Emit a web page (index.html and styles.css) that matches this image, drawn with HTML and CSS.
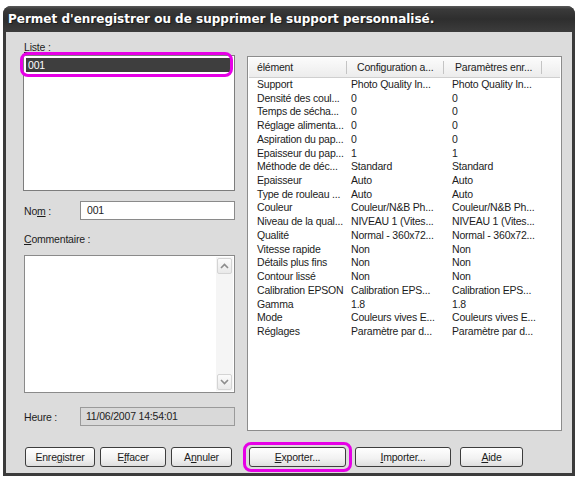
FILE: index.html
```html
<!DOCTYPE html>
<html lang="fr">
<head>
<meta charset="utf-8">
<title>Support personnalisé</title>
<link rel="stylesheet" href="styles.css">
</head>
<body>
<div class="window">
  <div class="titlebar"><span class="title">Permet d'enregistrer ou de supprimer le support personnalisé.</span></div>
  <div class="body">
    <div class="main">
      <div class="left">
        <div class="label lbl-liste"><u>L</u>iste :</div>
        <div class="listbox">
          <div class="item sel">001</div>
          <div class="hl hl-list"></div>
        </div>
        <div class="field-row nom">
          <span class="lbl">No<u>m</u> :</span>
          <div class="input">001</div>
        </div>
        <div class="label lbl-comm"><u>C</u>ommentaire :</div>
        <div class="textarea">
          <div class="scroll">
            <div class="arrow up"><svg width="9" height="6" viewBox="0 0 9 6"><path d="M1 5 L4.5 1.5 L8 5" fill="none" stroke="#8c8c8c" stroke-width="1.6"/></svg></div>
            <div class="track"></div>
            <div class="arrow down"><svg width="9" height="6" viewBox="0 0 9 6"><path d="M1 1 L4.5 4.5 L8 1" fill="none" stroke="#8c8c8c" stroke-width="1.6"/></svg></div>
          </div>
        </div>
        <div class="field-row heure">
          <span class="lbl">Heure :</span>
          <div class="input disabled">11/06/2007 14:54:01</div>
        </div>
      </div>
      <div class="right">
        <div class="listview">
          <div class="lv-head">
            <div class="hc c1">élément</div>
            <div class="hc c2">Configuration a...</div>
            <div class="hc c3">Paramètres enr...</div>
            <div class="hc c4"></div>
          </div>
          <div class="lv-rows">
            <div class="r">Support</div><div class="r">Photo Quality In...</div><div class="r">Photo Quality In...</div>
            <div class="r">Densité des coul...</div><div class="r">0</div><div class="r">0</div>
            <div class="r">Temps de sécha...</div><div class="r">0</div><div class="r">0</div>
            <div class="r">Réglage alimenta...</div><div class="r">0</div><div class="r">0</div>
            <div class="r">Aspiration du pap...</div><div class="r">0</div><div class="r">0</div>
            <div class="r">Epaisseur du pap...</div><div class="r">1</div><div class="r">1</div>
            <div class="r">Méthode de déc...</div><div class="r">Standard</div><div class="r">Standard</div>
            <div class="r">Epaisseur</div><div class="r">Auto</div><div class="r">Auto</div>
            <div class="r">Type de rouleau ...</div><div class="r">Auto</div><div class="r">Auto</div>
            <div class="r">Couleur</div><div class="r">Couleur/N&amp;B Ph...</div><div class="r">Couleur/N&amp;B Ph...</div>
            <div class="r">Niveau de la qual...</div><div class="r">NIVEAU 1 (Vites...</div><div class="r">NIVEAU 1 (Vites...</div>
            <div class="r">Qualité</div><div class="r">Normal - 360x72...</div><div class="r">Normal - 360x72...</div>
            <div class="r">Vitesse rapide</div><div class="r">Non</div><div class="r">Non</div>
            <div class="r">Détails plus fins</div><div class="r">Non</div><div class="r">Non</div>
            <div class="r">Contour lissé</div><div class="r">Non</div><div class="r">Non</div>
            <div class="r">Calibration EPSON</div><div class="r">Calibration EPS...</div><div class="r">Calibration EPS...</div>
            <div class="r">Gamma</div><div class="r">1.8</div><div class="r">1.8</div>
            <div class="r">Mode</div><div class="r">Couleurs vives E...</div><div class="r">Couleurs vives E...</div>
            <div class="r">Réglages</div><div class="r">Paramètre par d...</div><div class="r">Paramètre par d...</div>
          </div>
        </div>
      </div>
    </div>
    <div class="buttons">
      <div class="btn-group left-group">
        <div class="btn b-enr">Enre<u>g</u>istrer</div>
        <div class="btn b-eff">E<u>f</u>facer</div>
        <div class="btn b-ann">A<u>n</u>nuler</div>
      </div>
      <div class="btn-group right-group">
        <div class="btn b-exp"><u>E</u>xporter...<div class="hl hl-exp"></div></div>
        <div class="btn b-imp"><u>I</u>mporter...</div>
        <div class="btn b-aide"><u>A</u>ide</div>
      </div>
    </div>
  </div>
</div>
</body>
</html>
```

FILE: styles.css
```css
* { box-sizing: border-box; }

body {
  margin: 0;
  background: #ffffff;
  font-family: "Liberation Sans", Arial, sans-serif;
  font-size: 10.5px;
  letter-spacing: -0.2px;
  color: #1c1c1c;
}

u { text-decoration: underline; text-underline-offset: 1px; }

.window {
  margin: 6px 0 0 3px;
  width: 572px;
  height: 470px;
  display: flex;
  flex-direction: column;
  background: #3b3b3b;
  border-radius: 8px 8px 0 0;
  padding: 0 3px 3px;
}

.titlebar {
  height: 26px;
  margin: 0 -3px;
  padding-left: 5px;
  display: flex;
  align-items: center;
  border-radius: 8px 8px 0 0;
  background: linear-gradient(#5a5a5a 0, #3a3a3a 3px, #2e2e2e 50%, #3c3c3c 100%);
}

.title {
  color: #ffffff;
  font-family: "DejaVu Sans", Verdana, sans-serif;
  font-weight: bold;
  font-size: 12px;
  letter-spacing: 0;
  text-shadow: 1px 1px 0 #1a1a1a;
}

.body {
  flex: 1;
  background: #dcdcdc;
  display: flex;
  flex-direction: column;
  padding: 0 10px 0 16px;
}

.main {
  display: flex;
  gap: 12px;
}

.left {
  width: 213px;
  display: flex;
  flex-direction: column;
}

.label {
  height: 13px;
  line-height: 13px;
  padding-left: 2px;
}

.lbl-liste { margin-top: 9px; }

.listbox {
  position: relative;
  margin-top: 1px;
  margin-left: 1px;
  height: 136px;
  border: 1px solid #7d7d7d;
  background: #ffffff;
  padding: 2px 2px;
}

.item.sel {
  height: 14px;
  line-height: 14px;
  background: #3e3e3e;
  color: #ffffff;
  padding-left: 2px;
}

.hl {
  position: absolute;
  border: 3px solid #e600e6;
  border-radius: 8px;
  pointer-events: none;
}

.hl-list {
  left: -4px;
  top: -4px;
  width: 213px;
  height: 25px;
}

.field-row {
  display: flex;
  align-items: center;
  height: 19px;
}

.field-row .lbl {
  width: 58px;
  padding-left: 2px;
}

.input {
  width: 155px;
  height: 19px;
  line-height: 17px;
  border: 1px solid #8a8a8a;
  background: #ffffff;
  padding-left: 6px;
}

.input.disabled {
  background: #d9d9d9;
  border-color: #9a9a9a;
  color: #222;
  padding-left: 5px;
}

.nom { margin-top: 10px; }

.lbl-comm { margin-top: 13px; }

.textarea {
  margin-top: 9px;
  margin-left: 2px;
  width: 211px;
  height: 138px;
  border: 1px solid #8a8a8a;
  background: #ffffff;
  display: flex;
  justify-content: flex-end;
  padding: 1px;
}

.scroll {
  width: 17px;
  display: flex;
  flex-direction: column;
  background: #f5f5f5;
}

.arrow {
  height: 16px;
  margin: 1px;
  border: 1px solid #d4d4d4;
  border-radius: 2px;
  background: linear-gradient(#fbfbfb, #e9e9e9);
  display: flex;
  align-items: center;
  justify-content: center;
}

.track { flex: 1; }

.heure { margin-top: 14px; }

.right {
  width: 315px;
  margin-top: 24px;
  height: 375px;
}

.listview {
  height: 100%;
  border: 1px solid #8c8c8c;
  background: #ffffff;
  padding: 1px;
}

.lv-head {
  display: flex;
  height: 20px;
  background: linear-gradient(#fbfbfb, #ececec);
  border-bottom: 1px solid #cfcfcf;
}

.hc {
  position: relative;
  line-height: 19px;
  white-space: nowrap;
}

.hc::after {
  content: "";
  position: absolute;
  right: 0;
  top: 3px;
  bottom: 3px;
  width: 1px;
  background: #c4c4c4;
}

.hc.c1 { width: 98px; padding-left: 8px; }
.hc.c2 { width: 97px; padding-left: 10px; }
.hc.c3 { width: 98px; padding-left: 11px; }
.hc.c4 { flex: 1; }
.hc.c4::after { display: none; }

.lv-rows {
  display: grid;
  grid-template-columns: 98px 97px 98px;
  grid-auto-rows: 13.72px;
  line-height: 13.72px;
}

.r { white-space: nowrap; }
.r:nth-child(3n+1) { padding-left: 8px; }
.r:nth-child(3n+2) { padding-left: 4px; }
.r:nth-child(3n) { padding-left: 8px; }

.buttons {
  display: flex;
  gap: 12px;
  margin-top: 16px;
}

.btn-group {
  display: flex;
}

.left-group {
  width: 213px;
  padding-left: 3px;
  gap: 5px;
}

.right-group {
  padding-left: 2px;
  gap: 9px;
}

.btn {
  position: relative;
  height: 20px;
  line-height: 18px;
  text-align: center;
  border: 1px solid #3d3d3d;
  border-radius: 3px;
  background: linear-gradient(#ffffff, #f1f1f1 60%, #dedede);
  color: #1c1c1c;
}

.b-enr { width: 70px; }
.b-eff { width: 66px; }
.b-ann { width: 61px; }
.b-exp { width: 97px; }
.b-imp { width: 96px; }
.b-aide { width: 63px; }

.hl-exp {
  left: -7px;
  top: -6px;
  right: -7px;
  bottom: -6px;
}
```
